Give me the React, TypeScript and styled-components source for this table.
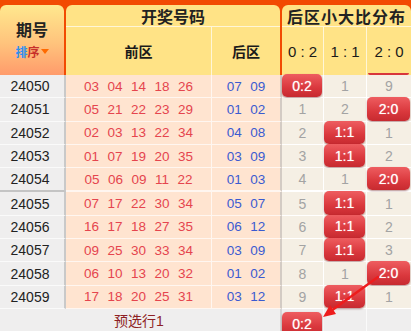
import React from 'react';
import styled, { createGlobalStyle } from 'styled-components';

const GlobalStyle = createGlobalStyle`
  html, body {
    margin: 0;
    padding: 0;
    background: #ffffff;
  }
  body {
    font-family: "Liberation Sans", "Noto Sans CJK SC", sans-serif;
  }
`;

const ORANGE = '#f24a02';
const HEAD_YELLOW = '#ffe386';

const Page = styled.div`
  position: relative;
  width: 411px;
  height: 331px;
  overflow: hidden;
`;

const Header = styled.div`
  display: grid;
  grid-template-columns: 64px 214px 129px;
  column-gap: 2px;
  height: 75px;
  padding-top: 5px;
  box-sizing: border-box;
  background: ${ORANGE};
`;

const PeriodHead = styled.div`
  display: flex;
  flex-direction: column;
  align-items: center;
  justify-content: center;
  gap: 2px;
  padding-bottom: 4px;
  border-radius: 6px 6px 0 0;
  background: linear-gradient(#ffe88e, #ffc37c 55%, #ff9b6b);
`;

const HeadTitle = styled.div`
  font-size: 16px;
  font-weight: bold;
  color: #222;
`;

const Sort = styled.div`
  display: flex;
  align-items: center;
  font-size: 12px;
  font-weight: bold;
`;

const SortChar = styled.span<{ $color: string }>`
  color: ${(p) => p.$color};
`;

const Caret = styled.span`
  width: 0;
  height: 0;
  margin-left: 1px;
  border-left: 4px solid transparent;
  border-right: 4px solid transparent;
  border-top: 5px solid #ff6a00;
`;

const GroupHead = styled.div`
  display: grid;
  grid-template-rows: 22px 1fr;
  border-radius: 6px 6px 0 0;
  background: ${HEAD_YELLOW};
  overflow: hidden;
`;

const GroupTitle = styled.div<{ $spacing?: number }>`
  display: flex;
  align-items: center;
  justify-content: center;
  font-size: 16px;
  font-weight: bold;
  color: #222;
  letter-spacing: ${(p) => p.$spacing ?? 0}px;
  border-bottom: 1px solid #fff6d8;
`;

const SubRow = styled.div<{ $cols: string }>`
  display: grid;
  grid-template-columns: ${(p) => p.$cols};
`;

const SubCell = styled.div<{ $mono?: boolean; $last?: boolean }>`
  display: flex;
  align-items: center;
  justify-content: center;
  font-size: ${(p) => (p.$mono ? '15px' : '14px')};
  font-weight: ${(p) => (p.$mono ? 'normal' : 'bold')};
  color: #1a1a1a;
  white-space: pre;
  border-right: ${(p) => (p.$last ? 'none' : '1px solid #fff6d8')};
`;

const Body = styled.div`
  display: flex;
  flex-direction: column;
`;

const Row = styled.div<{ $split?: boolean }>`
  display: grid;
  grid-template-columns: 66px 146px 70px 42px 43px 44px;
  height: ${(p) => (p.$split ? '24.3px' : '23.3px')};
`;

const PeriodCell = styled.div<{ $split?: boolean }>`
  display: flex;
  align-items: center;
  justify-content: center;
  padding-right: 4px;
  box-sizing: border-box;
  font-size: 14px;
  color: #222;
  background: #efeeee;
  border-right: 2px solid #c9c9c9;
  border-bottom: ${(p) => (p.$split ? '2px solid #c4c4c4' : '1px solid #fafafa')};
`;

const BallCell = styled.div<{ $back?: boolean; $split?: boolean }>`
  display: flex;
  align-items: center;
  justify-content: center;
  gap: 8.5px;
  box-sizing: border-box;
  font-size: 13.5px;
  color: ${(p) => (p.$back ? '#3b5bd0' : '#e5454e')};
  background: #ffe4d0;
  border-bottom: ${(p) => (p.$split ? '2px' : '1px')} solid #fff6f0;
  border-right: ${(p) => (p.$back ? '2px solid #d3cbc4' : '1px solid #fff6f0')};
`;

const DistCell = styled.div<{ $last?: boolean; $split?: boolean }>`
  position: relative;
  display: flex;
  align-items: center;
  justify-content: center;
  box-sizing: border-box;
  font-size: 14px;
  color: #a3a3a3;
  background: #f5efe4;
  border-bottom: ${(p) => (p.$split ? '2px' : '1px')} solid #ffffff;
  border-right: ${(p) => (p.$last ? 'none' : '1px solid #ffffff')};
`;

const Badge = styled.div`
  align-self: stretch;
  flex: 1;
  display: flex;
  align-items: center;
  justify-content: center;
  margin: -1px 1px 0 0;
  border-radius: 5px;
  font-size: 14px;
  color: #fff;
  text-shadow: 0 0 1px rgba(255, 255, 255, 0.7);
  background: linear-gradient(#ee5d60, #da383d 60%, #c72a30);
  box-shadow: 0 1px 2px rgba(90, 0, 0, 0.45);
`;

const BadgeTail = styled.div`
  position: absolute;
  top: -2px;
  left: 1px;
  right: 2px;
  height: 2px;
  border-radius: 0 0 3px 3px;
  background: #d8363b;
`;

const Footer = styled.div`
  display: grid;
  grid-template-columns: 66px 146px 70px 42px 43px 44px;
  height: 23px;
  background: #efeeee;
`;

const FootCell = styled.div<{ $line?: string }>`
  display: flex;
  align-items: center;
  justify-content: center;
  box-sizing: border-box;
  font-size: 14px;
  color: #8e1f24;
  border-right: ${(p) => p.$line ?? 'none'};
`;

const FootBadge = styled(Badge)`
  margin: 3px 1px -4px 0;
  border-radius: 5px 5px 0 0;
`;

const Arrow = styled.svg`
  position: absolute;
  left: 0;
  top: 0;
  pointer-events: none;
`;

type Draw = {
  id: string;
  front: string[];
  back: string[];
  dist: string[];
};

const draws: Draw[] = [
  { id: '24050', front: ['03', '04', '14', '18', '26'], back: ['07', '09'], dist: ['0:2', '1', '9'] },
  { id: '24051', front: ['05', '21', '22', '23', '29'], back: ['01', '02'], dist: ['1', '2', '2:0'] },
  { id: '24052', front: ['02', '03', '13', '22', '34'], back: ['04', '08'], dist: ['2', '1:1', '1'] },
  { id: '24053', front: ['01', '07', '19', '20', '35'], back: ['03', '09'], dist: ['3', '1:1', '2'] },
  { id: '24054', front: ['05', '06', '09', '11', '22'], back: ['01', '03'], dist: ['4', '1', '2:0'] },
  { id: '24055', front: ['07', '17', '22', '30', '34'], back: ['05', '07'], dist: ['5', '1:1', '1'] },
  { id: '24056', front: ['16', '17', '18', '27', '35'], back: ['06', '12'], dist: ['6', '1:1', '2'] },
  { id: '24057', front: ['09', '25', '30', '33', '34'], back: ['03', '09'], dist: ['7', '1:1', '3'] },
  { id: '24058', front: ['06', '10', '13', '20', '32'], back: ['01', '02'], dist: ['8', '1', '2:0'] },
  { id: '24059', front: ['17', '18', '20', '25', '31'], back: ['03', '12'], dist: ['9', '1:1', '1'] },
];

function App() {
  return (
    <Page>
      <GlobalStyle />
      <Header>
        <PeriodHead>
          <HeadTitle>期号</HeadTitle>
          <Sort>
            <SortChar $color="#2d8ff0">排</SortChar>
            <SortChar $color="#c8302a">序</SortChar>
            <Caret />
          </Sort>
        </PeriodHead>
        <GroupHead>
          <GroupTitle>开奖号码</GroupTitle>
          <SubRow $cols="146px 68px">
            <SubCell>前区</SubCell>
            <SubCell $last>后区</SubCell>
          </SubRow>
        </GroupHead>
        <GroupHead>
          <GroupTitle $spacing={1}>后区小大比分布</GroupTitle>
          <SubRow $cols="42px 43px 44px">
            <SubCell $mono>0 : 2</SubCell>
            <SubCell $mono>1 : 1</SubCell>
            <SubCell $mono $last>2 : 0</SubCell>
          </SubRow>
        </GroupHead>
      </Header>

      <Body>
        {draws.map((d, i) => {
          const split = i === 4;
          return (
            <Row key={d.id} $split={split}>
              <PeriodCell $split={split}>{d.id}</PeriodCell>
              <BallCell $split={split}>
                {d.front.map((n, k) => (
                  <span key={k}>{n}</span>
                ))}
              </BallCell>
              <BallCell $back $split={split}>
                {d.back.map((n, k) => (
                  <span key={k}>{n}</span>
                ))}
              </BallCell>
              {d.dist.map((v, k) => (
                <DistCell key={k} $last={k === 2} $split={split}>
                  {i === 0 && k === 2 && <BadgeTail />}
                  {v.includes(':') ? <Badge>{v}</Badge> : v}
                </DistCell>
              ))}
            </Row>
          );
        })}
      </Body>

      <Footer>
        <FootCell />
        <FootCell>预选行1</FootCell>
        <FootCell $line="2px solid #d6d6d6" />
        <FootCell $line="1px solid #fafafa">
          <FootBadge>0:2</FootBadge>
        </FootCell>
        <FootCell $line="1px solid #fafafa" />
        <FootCell />
      </Footer>

      <Arrow width="411" height="331" viewBox="0 0 411 331">
        <line x1="378" y1="277" x2="331" y2="311" stroke="#ee1c1c" strokeWidth="2.4" strokeLinecap="round" />
        <polygon points="323,317 330,305 336,314" fill="#ee1c1c" />
      </Arrow>
    </Page>
  );
}

export default App;
